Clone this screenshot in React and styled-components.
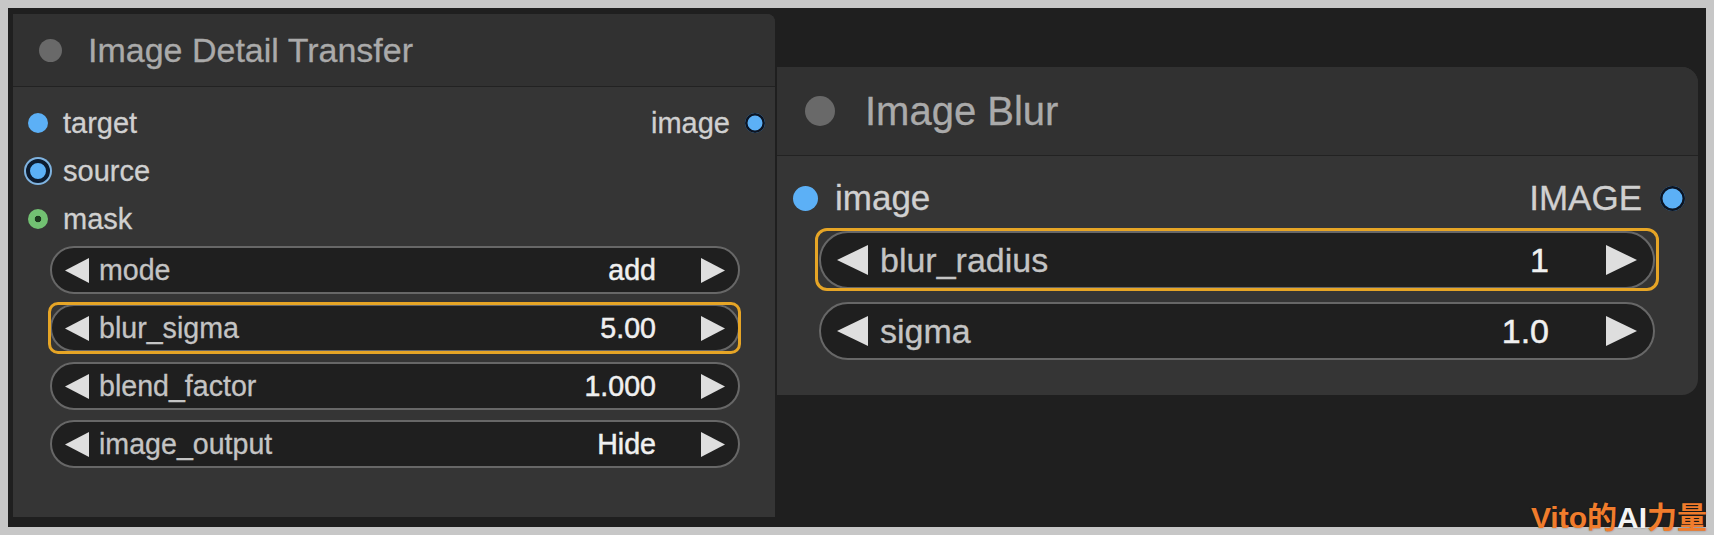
import React from 'react';
import styled, { createGlobalStyle, css } from 'styled-components';

const Global = createGlobalStyle`
  html, body { margin: 0; padding: 0; background: #c7c7c7; }
  body { font-family: "Liberation Sans", Arial, sans-serif; }
  * { box-sizing: border-box; }
`;

const SIZES = {
  left: {
    width: 762, height: 503, radius: '0 8px 0 0',
    headerH: 73, titleDot: 23, titlePadL: 25.5, titleGap: 26.5, titleSize: 34,
    bodyPadTop: 12, rowH: 48, slotFont: 29, slotDot: 20, slotPadL: 15, slotPadR: 10, slotGap: 15,
    wGapTop: 3, wPadL: 37, wPadR: 35, wH: 48, wGap: 10, wFont: 28.6,
    arrowInset: 15, arrowW: 24, arrowH: 25, labelGap: 10, valueGap: 45, hlInset: '-4px -3px -4px -4px', hlRadius: 10,
  },
  right: {
    width: 921, height: 328, radius: '0 16px 16px 0',
    headerH: 89, titleDot: 30, titlePadL: 28, titleGap: 30, titleSize: 40,
    bodyPadTop: 13, rowH: 58, slotFont: 35, slotDot: 25, slotPadL: 15.5, slotPadR: 13.5, slotGap: 17.5,
    wGapTop: 4, wPadL: 42, wPadR: 43, wH: 58, wGap: 13, wFont: 34,
    arrowInset: 18, arrowW: 31, arrowH: 30, labelGap: 12, valueGap: 57, hlInset: '-5px -6px -4px -6px', hlRadius: 12,
  },
};

const Frame = styled.div`
  position: relative;
  width: 1714px;
  height: 535px;
  padding: 8px;
  background: #c7c7c7;
  overflow: hidden;
`;

const Canvas = styled.div`
  width: 100%;
  height: 100%;
  background: #1f1f1f;
  display: flex;
  align-items: flex-start;
  gap: 2px;
  padding: 6px 8px 10px 5px;
`;

const Node = styled.div`
  width: ${p => p.$s.width}px;
  height: ${p => p.$s.height}px;
  margin-top: ${p => p.$top || 0}px;
  border-radius: ${p => p.$s.radius};
  background: #353535;
  display: flex;
  flex-direction: column;
  overflow: hidden;
  flex-shrink: 0;
`;

const Header = styled.div`
  height: ${p => p.$s.headerH}px;
  flex-shrink: 0;
  background: #313131;
  border-bottom: 1px solid #222;
  display: flex;
  align-items: center;
  padding-left: ${p => p.$s.titlePadL}px;
  gap: ${p => p.$s.titleGap}px;
`;

const TitleDot = styled.span`
  width: ${p => p.$s.titleDot}px;
  height: ${p => p.$s.titleDot}px;
  border-radius: 50%;
  background: #696969;
  flex-shrink: 0;
`;

const Title = styled.span`
  font-size: ${p => p.$s.titleSize}px;
  color: #aaaaaa;
  -webkit-text-stroke: 0.3px #aaaaaa;
  white-space: nowrap;
`;

const Body = styled.div`
  flex: 1;
  display: flex;
  flex-direction: column;
  padding-top: ${p => p.$s.bodyPadTop}px;
`;

const SlotRow = styled.div`
  height: ${p => p.$s.rowH}px;
  display: flex;
  align-items: center;
  justify-content: space-between;
  padding: 0 ${p => p.$s.slotPadR}px 0 ${p => p.$s.slotPadL}px;
`;

const Slot = styled.div`
  display: flex;
  align-items: center;
  gap: ${p => p.$gap ?? p.$s.slotGap}px;
  font-size: ${p => p.$s.slotFont}px;
  color: #d0d0d0;
  -webkit-text-stroke: 0.3px #d0d0d0;
  white-space: nowrap;
`;

const dotKinds = {
  plain: css`background: #5cb0f6;`,
  out: css`background: #5cb0f6; box-shadow: inset 0 0 0 2.5px #0c1422;`,
  ring: css`
    background: #5cb0f6;
    border: 4px solid #0d1c30;
    box-shadow: 0 0 0 2px #7fb3e0;
    margin-left: -2px;
  `,
  mask: css`
    background: radial-gradient(circle, #1d3a1f 0 3px, #72c172 3.6px);
  `,
};

const Dot = styled.span`
  width: ${p => p.$size}px;
  height: ${p => p.$size}px;
  border-radius: 50%;
  flex-shrink: 0;
  ${p => dotKinds[p.$kind || 'plain']}
`;

const Widgets = styled.div`
  display: flex;
  flex-direction: column;
  gap: ${p => p.$s.wGap}px;
  margin-top: ${p => p.$s.wGapTop}px;
  padding: 0 ${p => p.$s.wPadR}px 0 ${p => p.$s.wPadL}px;
`;

const Widget = styled.div`
  position: relative;
  height: ${p => p.$s.wH}px;
  border-radius: ${p => p.$s.wH / 2}px;
  background: #1f1f1f;
  border: 2px solid #676767;
  display: flex;
  align-items: center;
  padding: 0 ${p => p.$s.arrowInset - 2}px;
  font-size: ${p => p.$s.wFont}px;
  ${p => p.$active && css`
    &::after {
      content: '';
      position: absolute;
      inset: ${p.$s.hlInset};
      border: 3px solid #e6a526;
      border-radius: ${p.$s.hlRadius}px;
      pointer-events: none;
    }
  `}
`;

const WLabel = styled.span`
  margin-left: ${p => p.$s.labelGap}px;
  color: #c4c4c4;
  -webkit-text-stroke: 0.3px #c4c4c4;
  flex: 1;
  white-space: nowrap;
`;

const WValue = styled.span`
  margin-right: ${p => p.$s.valueGap}px;
  color: #f0f0f0;
  -webkit-text-stroke: 0.5px #f0f0f0;
  white-space: nowrap;
`;

const ArrowSvg = styled.svg`
  flex-shrink: 0;
  display: block;
`;

const Arrow = ({ s, dir }) => (
  <ArrowSvg width={s.arrowW} height={s.arrowH} viewBox="0 0 24 24" preserveAspectRatio="none">
    {dir === 'left'
      ? <polygon points="24,0 24,24 0,12" fill="#dedede" />
      : <polygon points="0,0 0,24 24,12" fill="#dedede" />}
  </ArrowSvg>
);

const Watermark = styled.div`
  position: absolute;
  right: 7px;
  top: 503px;
  font-family: "Liberation Sans", "Noto Sans CJK SC", sans-serif;
  font-weight: 700;
  font-size: 30px;
  line-height: 1;
  color: #f07c2c;
  white-space: nowrap;
  text-shadow: 0 0 2px rgba(0,0,0,0.4);
`;

const WhitePart = styled.span`
  color: #f4f4f4;
`;

const WidgetRow = ({ s, label, value, active }) => (
  <Widget $s={s} $active={active}>
    <Arrow s={s} dir="left" />
    <WLabel $s={s}>{label}</WLabel>
    <WValue $s={s}>{value}</WValue>
    <Arrow s={s} dir="right" />
  </Widget>
);

export default function App() {
  const L = SIZES.left;
  const R = SIZES.right;
  return (
    <>
      <Global />
      <Frame>
        <Canvas>
          <Node $s={L}>
            <Header $s={L}>
              <TitleDot $s={L} />
              <Title $s={L}>Image Detail Transfer</Title>
            </Header>
            <Body $s={L}>
              <SlotRow $s={L}>
                <Slot $s={L}><Dot $size={L.slotDot} $kind="plain" />target</Slot>
                <Slot $s={L}>image<Dot $size={L.slotDot} $kind="out" /></Slot>
              </SlotRow>
              <SlotRow $s={L}>
                <Slot $s={L} $gap={13}><Dot $size={24} $kind="ring" />source</Slot>
              </SlotRow>
              <SlotRow $s={L}>
                <Slot $s={L}><Dot $size={L.slotDot} $kind="mask" />mask</Slot>
              </SlotRow>
              <Widgets $s={L}>
                <WidgetRow s={L} label="mode" value="add" />
                <WidgetRow s={L} label="blur_sigma" value="5.00" active />
                <WidgetRow s={L} label="blend_factor" value="1.000" />
                <WidgetRow s={L} label="image_output" value="Hide" />
              </Widgets>
            </Body>
          </Node>
          <Node $s={R} $top={53}>
            <Header $s={R}>
              <TitleDot $s={R} />
              <Title $s={R}>Image Blur</Title>
            </Header>
            <Body $s={R}>
              <SlotRow $s={R}>
                <Slot $s={R}><Dot $size={R.slotDot} $kind="plain" />image</Slot>
                <Slot $s={R}>IMAGE<Dot $size={R.slotDot} $kind="out" /></Slot>
              </SlotRow>
              <Widgets $s={R}>
                <WidgetRow s={R} label="blur_radius" value="1" active />
                <WidgetRow s={R} label="sigma" value="1.0" />
              </Widgets>
            </Body>
          </Node>
        </Canvas>
        <Watermark>Vito的<WhitePart>AI</WhitePart>力量</Watermark>
      </Frame>
    </>
  );
}
